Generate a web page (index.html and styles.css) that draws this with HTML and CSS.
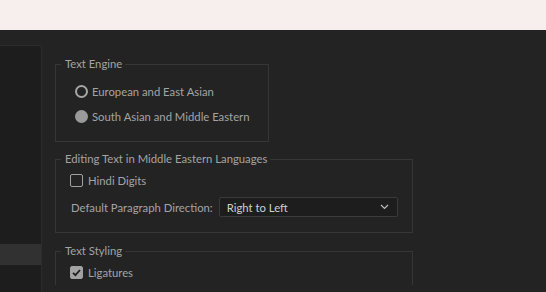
FILE: index.html
```html
<!DOCTYPE html>
<html lang="en">
<head>
  <meta charset="UTF-8">
  <title>Type Preferences</title>
  <link rel="stylesheet" href="styles.css">
</head>
<body>

  <div class="titlebar"></div>

  <div class="dialog">
    <div class="sidebar">
      <div class="side-row selected"></div>
    </div>

    <div class="content">
      <fieldset class="group engine">
        <legend>Text Engine</legend>
        <label class="option"><span class="radio"></span> European and East Asian</label>
        <label class="option"><span class="radio on"></span> South Asian and Middle Eastern</label>
      </fieldset>

      <fieldset class="group">
        <legend>Editing Text in Middle Eastern Languages</legend>
        <label class="option"><span class="check"></span> Hindi Digits</label>
        <div class="field">
          <span class="field-label">Default Paragraph Direction:</span>
          <div class="select">
            <span>Right to Left</span>
            <svg width="9" height="6" viewBox="0 0 9 6"><path d="M1 1 L4.5 4.5 L8 1" fill="none" stroke="#bdbdbd" stroke-width="1.2"/></svg>
          </div>
        </div>
      </fieldset>

      <fieldset class="group last">
        <legend>Text Styling</legend>
        <label class="option"><span class="check on">
          <svg width="11" height="11" viewBox="0 0 11 11"><path d="M2 5.8 L4.4 8.2 L9 3" fill="none" stroke="#1f1f1f" stroke-width="1.8"/></svg>
        </span> Ligatures</label>
      </fieldset>
    </div>
  </div>

</body>
</html>
```

FILE: styles.css
```css
body {
  margin: 0;
  background-color: #232323;
  font-family: 'Lato', sans-serif;
  font-size: 11.3px;
  color: #a3a3a3;
  overflow: hidden;
  height: 292px;
}

.titlebar {
  height: 30px;
  background-color: #f7efed;
}

.dialog {
  display: flex;
  padding-top: 15px;
}

.sidebar {
  width: 42px;
  height: 247px;
  flex-shrink: 0;
  background-color: #1d1d1d;
  border: 1px solid #2c2c2c;
  border-left: none;
  border-bottom: none;
  border-top-right-radius: 3px;
  padding-top: 198px;
  box-sizing: border-box;
}

.side-row {
  height: 21px;
}

.side-row.selected {
  background-color: #313131;
}

.content {
  padding-left: 13px;
  padding-top: 12px;
}

.group {
  border: 1px solid #363636;
  margin: 0 0 11px 0;
  padding: 2px 0 15px 14px;
  width: 358px;
  box-sizing: border-box;
}

.group.engine {
  width: 214px;
  padding-top: 8px;
  padding-bottom: 12px;
  margin-bottom: 10px;
}

.group.last {
  padding-bottom: 0;
  margin-bottom: 0;
  border-bottom: none;
}

legend {
  padding: 0 3px 0 4px;
  margin-left: -9px;
  line-height: 14px;
}

.option {
  display: flex;
  align-items: center;
  height: 25px;
  color: #a3a3a3;
}

.engine .option {
  padding-left: 5px;
}

.radio {
  width: 9px;
  height: 9px;
  border: 2px solid #a6a6a6;
  border-radius: 50%;
  margin-right: 4px;
}

.radio.on {
  background-color: #9a9a9a;
  border-color: #9a9a9a;
}

.check {
  width: 11px;
  height: 11px;
  border: 1px solid #a0a0a0;
  border-radius: 2px;
  margin-right: 5px;
  display: flex;
  align-items: center;
  justify-content: center;
}

.check.on {
  background-color: #a3a3a3;
}

.field {
  display: flex;
  align-items: center;
  margin-top: 4px;
  padding-left: 1px;
  white-space: nowrap;
}

.field-label {
  margin-right: 6px;
}

.select {
  width: 179px;
  height: 20px;
  box-sizing: border-box;
  background-color: #1d1d1d;
  border: 1px solid #3a3a3a;
  border-radius: 2px;
  display: flex;
  align-items: center;
  justify-content: space-between;
  padding: 0 8px 0 7px;
  color: #cfcfcf;
}
```
